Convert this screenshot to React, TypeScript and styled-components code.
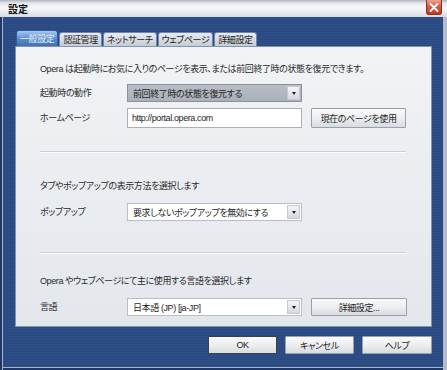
import React from "react";
import styled, { createGlobalStyle } from "styled-components";

const Global = createGlobalStyle`
  html, body { margin: 0; padding: 0; background: #2c4b83; }
  body {
    font-family: "Liberation Sans", "Noto Sans CJK JP", sans-serif;
    font-feature-settings: "palt";
    font-size: 9px;
    letter-spacing: -0.4px;
    color: #2a2a2a;
  }
`;

const Window = styled.div`
  width: 447px;
  height: 370px;
  display: flex;
  flex-direction: column;
  overflow: hidden;
`;

const TitleBar = styled.div`
  height: 17px;
  flex: none;
  display: flex;
  align-items: flex-start;
  justify-content: space-between;
  padding: 0 5px 0 8px;
  background: linear-gradient(#aeb3be 0, #e4e6eb 3px, #f7f8fa 8px, #d8dbe2 17px);
`;

const Title = styled.div`
  font-family: "Noto Sans CJK JP", sans-serif;
  font-weight: 700;
  font-size: 10px;
  letter-spacing: 0;
  line-height: 17px;
  color: #111;
`;

const CloseButton = styled.div`
  width: 16px;
  height: 15px;
  box-sizing: border-box;
  border: 1px solid #8e2b1c;
  border-top: none;
  border-radius: 0 0 3px 3px;
  background: linear-gradient(#f0a090, #d85c44 45%, #c23a22);
  display: flex;
  align-items: center;
  justify-content: center;
`;

const Frame = styled.div`
  flex: 1;
  display: flex;
  flex-direction: column;
  padding: 13px 15px 0 15px;
  background: repeating-linear-gradient(#2a4981 0 1px, #2f4f88 1px 2px);
  box-shadow: inset 2px 0 0 #1f3764, inset 3px 0 0 #a6b4cc, inset -4px 0 0 #b4bccb,
    inset 0 -2px 0 #1f3764, inset 0 -3px 0 #a6b4cc;
`;

const TabRow = styled.div`
  height: 16px;
  display: flex;
  align-items: flex-end;
  gap: 1px;
  padding-left: 1px;
`;

const Tab = styled.div<{ $active?: boolean }>`
  box-sizing: border-box;
  flex: none;
  height: ${(p) => (p.$active ? 16 : 14)}px;
  padding: 0 3px;
  display: flex;
  align-items: center;
  justify-content: center;
  white-space: nowrap;
  font-family: "Noto Sans CJK JP", sans-serif;
  font-feature-settings: "palt";
  font-size: 9px;
  letter-spacing: -0.4px;
  border-radius: 3px 3px 0 0;
  border: 1px solid ${(p) => (p.$active ? "#2c5c9c" : "#6e86ac")};
  border-bottom: none;
  color: ${(p) => (p.$active ? "#e6efff" : "#1c1c1c")};
  background: ${(p) =>
    p.$active
      ? "linear-gradient(#a8c8ee, #5d8fcc 50%, #3f70b2)"
      : "linear-gradient(#e8ebf0, #c6ccd6)"};
`;

const Panel = styled.div`
  box-sizing: border-box;
  height: 281px;
  border: 1px solid #7f93b6;
  background: linear-gradient(#f1f3f5, #e3e7ec);
  padding: 0 25px 0 24px;
  display: flex;
  flex-direction: column;
`;

const Intro = styled.div<{ $top: number }>`
  margin-top: ${(p) => p.$top}px;
  line-height: 12px;
  height: 12px;
  white-space: nowrap;
`;

const Row = styled.div<{ $top: number }>`
  margin-top: ${(p) => p.$top}px;
  display: grid;
  grid-template-columns: 78px 175px auto;
  column-gap: 9px;
  align-items: center;
`;

const Label = styled.div`
  line-height: 12px;
  white-space: nowrap;
`;

const SelectBox = styled.div<{ $gray?: boolean }>`
  box-sizing: border-box;
  height: 18px;
  display: flex;
  align-items: stretch;
  border: 1px solid ${(p) => (p.$gray ? "#8b919c" : "#b9bec8")};
  background: ${(p) => (p.$gray ? "linear-gradient(#b9bdc5, #aab0b9)" : "#ffffff")};
`;

const SelectText = styled.div`
  flex: 1;
  display: flex;
  align-items: center;
  padding-left: 5px;
  white-space: nowrap;
  color: #1e1e1e;
`;

const ArrowButton = styled.div`
  width: 13px;
  margin: 1px;
  box-sizing: border-box;
  border: 1px solid #c4c8d0;
  background: linear-gradient(#f4f5f7, #d4d8de);
  display: flex;
  align-items: center;
  justify-content: center;
`;

const Arrow = styled.div`
  width: 0;
  height: 0;
  border-left: 2.5px solid transparent;
  border-right: 2.5px solid transparent;
  border-top: 3px solid #222;
`;

const TextInput = styled.div`
  box-sizing: border-box;
  height: 20px;
  border: 1px solid #aab0ba;
  background: #fff;
  display: flex;
  align-items: center;
  padding-left: 4px;
  color: #1e1e1e;
`;

const Button = styled.div<{ $w: number; $h: number; $default?: boolean }>`
  box-sizing: border-box;
  width: ${(p) => p.$w}px;
  height: ${(p) => p.$h}px;
  border: 1px solid ${(p) => (p.$default ? "#3a3f48" : "#9aa0aa")};
  border-radius: 1px;
  background: linear-gradient(#fafafa, #eceef0 50%, #d8dbe0);
  display: flex;
  align-items: center;
  justify-content: center;
  white-space: nowrap;
  color: #1e1e1e;
`;

const Separator = styled.div<{ $top: number }>`
  margin-top: ${(p) => p.$top}px;
  height: 1px;
  background: #c9cdd5;
  border-bottom: 1px solid #fbfcfd;
`;

const ButtonBar = styled.div`
  margin-top: 9px;
  display: flex;
  justify-content: flex-end;
  gap: 8px;
`;

const Select = ({ text, gray }: { text: string; gray?: boolean }) => (
  <SelectBox $gray={gray}>
    <SelectText>{text}</SelectText>
    <ArrowButton>
      <Arrow />
    </ArrowButton>
  </SelectBox>
);

const tabs = [
  { label: "一般設定", active: true },
  { label: "認証管理" },
  { label: "ネットサーチ" },
  { label: "ウェブページ" },
  { label: "詳細設定" },
];

export default function App() {
  return (
    <>
      <Global />
      <Window>
        <TitleBar>
          <Title>設定</Title>
          <CloseButton>
            <svg width="10" height="9" viewBox="0 0 10 9">
              <path d="M1.5 1 L8.5 8 M8.5 1 L1.5 8" stroke="#fff" strokeWidth="1.8" strokeLinecap="round" />
            </svg>
          </CloseButton>
        </TitleBar>
        <Frame>
          <TabRow>
            {tabs.map((t) => (
              <Tab key={t.label} $active={t.active}>
                {t.label}
              </Tab>
            ))}
          </TabRow>
          <Panel>
            <Intro $top={16}>Opera は起動時にお気に入りのページを表示、または前回終了時の状態を復元できます。</Intro>
            <Row $top={9}>
              <Label>起動時の動作</Label>
              <Select text="前回終了時の状態を復元する" gray />
            </Row>
            <Row $top={6}>
              <Label>ホームページ</Label>
              <TextInput>http://portal.opera.com</TextInput>
              <Button $w={95} $h={20}>現在のページを使用</Button>
            </Row>
            <Separator $top={23} />
            <Intro $top={27}>タブやポップアップの表示方法を選択します</Intro>
            <Row $top={11}>
              <Label>ポップアップ</Label>
              <Select text="要求しないポップアップを無効にする" />
            </Row>
            <Separator $top={31} />
            <Intro $top={21}>Opera やウェブページにて主に使用する言語を選択します</Intro>
            <Row $top={11}>
              <Label>言語</Label>
              <Select text="日本語 (JP) [ja-JP]" />
              <Button $w={96} $h={18}>詳細設定...</Button>
            </Row>
          </Panel>
          <ButtonBar>
            <Button $w={69} $h={18} $default>OK</Button>
            <Button $w={69} $h={18}>キャンセル</Button>
            <Button $w={70} $h={18}>ヘルプ</Button>
          </ButtonBar>
        </Frame>
      </Window>
    </>
  );
}
